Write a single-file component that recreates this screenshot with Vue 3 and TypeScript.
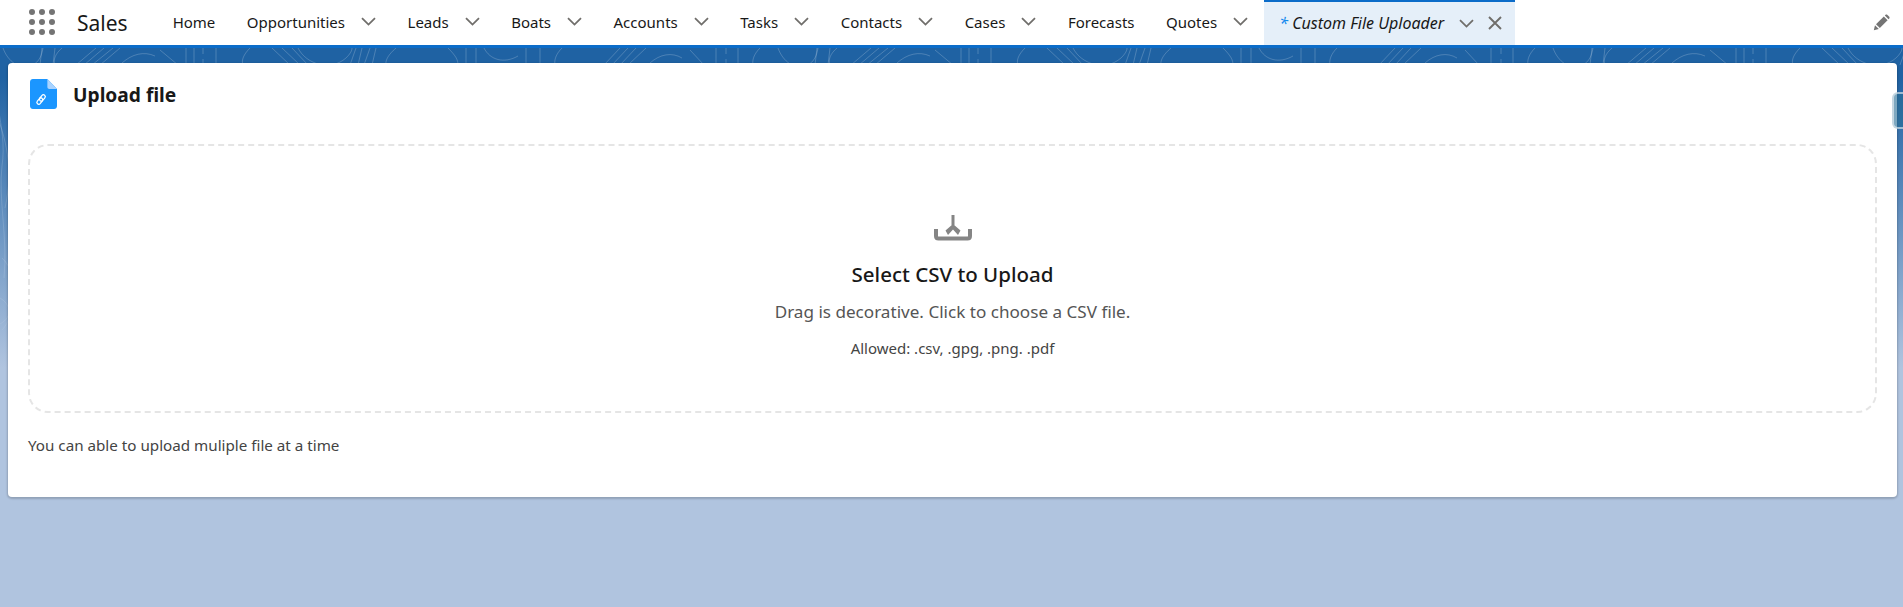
<script setup lang="ts">
interface NavItem {
  label: string
  menu: boolean
}

const items: NavItem[] = [
  { label: 'Home', menu: false },
  { label: 'Opportunities', menu: true },
  { label: 'Leads', menu: true },
  { label: 'Boats', menu: true },
  { label: 'Accounts', menu: true },
  { label: 'Tasks', menu: true },
  { label: 'Contacts', menu: true },
  { label: 'Cases', menu: true },
  { label: 'Forecasts', menu: false },
  { label: 'Quotes', menu: true },
]

const dots: number[] = [0, 1, 2, 3, 4, 5, 6, 7, 8]
</script>

<template>
  <div class="page">
    <div class="backdrop">
      <svg class="contours" width="1903" height="340" aria-hidden="true">
        <defs>
          <linearGradient id="fade" x1="0" y1="0" x2="0" y2="1">
            <stop offset="0" stop-color="#fff" stop-opacity="1" />
            <stop offset="0.75" stop-color="#fff" stop-opacity="0.55" />
            <stop offset="1" stop-color="#fff" stop-opacity="0" />
          </linearGradient>
          <mask id="fadeMask">
            <rect width="1903" height="340" fill="url(#fade)" />
          </mask>
          <pattern id="lines" width="775" height="340" patternUnits="userSpaceOnUse">
            <g fill="none" stroke="#fff" stroke-opacity="0.2" stroke-width="1">
              <path d="M3 0C8 14 20 22 31 18C40 14 42 6 43 0" />
              <path d="M-4 12C-12 40 8 78 2 118C-2 150 8 190 4 230" />
              <path d="M-6 60C6 90 14 120 5 160" />
              <path d="M2 210C20 226 16 268 2 282" />
              <path d="M0 250C10 256 14 268 0 276" />
              <path d="M42 0L40 17M55 0L53 17" />
              <path d="M62 0C55 6 53 12 55 17" />
              <path d="M76 17L96 0M84 17L104 0M92 17L113 0M100 17L120 0" />
              <path d="M122 15C132 6 144 3 155 8" />
              <path d="M160 2L178 17M186 0V17M194 0V17M203 0V6M203 11V17M216 0V17" />
              <path d="M250 0C244 6 241 12 243 17" />
              <path d="M272 0L290 17M282 0L300 17M292 0L308 17M298 0C306 16 330 24 346 10C350 6 352 3 352 0" />
              <path d="M356 0L350 17M362 0L358 17M370 0L364 17M376 0L372 17" />
              <path d="M396 0C389 6 385 12 386 17" />
              <path d="M448 0C456 8 458 12 458 17M466 0V17M476 0V17" />
              <path d="M484 0C490 12 504 16 518 8" />
              <path d="M526 0V17M540 0V17" />
              <path d="M562 0C556 6 554 12 555 17" />
              <path d="M604 17L620 0M612 17L628 0M620 17L636 0M628 17L646 0" />
              <path d="M650 15C660 6 672 4 682 10" />
              <path d="M690 2L704 17M716 0V17M726 0V6M726 11V17M738 0V17" />
              <path d="M760 0C754 6 752 12 753 17" />
            </g>
          </pattern>
        </defs>
        <rect width="1903" height="340" fill="url(#lines)" mask="url(#fadeMask)" />
      </svg>
    </div>

    <header class="topbar">
      <button class="launcher" type="button" aria-label="App launcher">
        <span v-for="dot in dots" :key="dot" class="dot"></span>
      </button>
      <span class="app-name">Sales</span>
      <nav class="nav">
        <a v-for="item in items" :key="item.label" class="nav-item">
          <span>{{ item.label }}</span>
          <svg v-if="item.menu" class="chevron" width="15" height="9" viewBox="0 0 15 9" aria-hidden="true">
            <path d="M1 1.2L7.5 7.6L14 1.2" />
          </svg>
        </a>
      </nav>
      <div class="tab">
        <span class="star">*</span>
        <span class="tab-label">Custom File Uploader</span>
        <svg class="chevron" width="15" height="9" viewBox="0 0 15 9" aria-hidden="true">
          <path d="M1 1.2L7.5 7.6L14 1.2" />
        </svg>
        <svg class="close" width="14" height="14" viewBox="0 0 14 14" aria-hidden="true">
          <path d="M1 1L13 13M13 1L1 13" />
        </svg>
      </div>
      <svg class="pencil" width="17" height="17" viewBox="0 0 17 17" aria-hidden="true">
        <path d="M0.8 16.2L2 11.2L5.8 15L0.8 16.2Z" />
        <path d="M3 10.2L10.8 2.4L14.6 6.2L6.8 14L3 10.2Z" />
        <path d="M11.8 1.4L12.6 0.7C13.1 0.3 13.7 0.3 14.2 0.7L16.3 2.8C16.7 3.3 16.7 3.9 16.3 4.4L15.6 5.2L11.8 1.4Z" />
      </svg>
    </header>

    <main class="content">
      <section class="card">
        <div class="card-head">
          <svg class="file-icon" width="27" height="30" viewBox="0 0 28 30" preserveAspectRatio="none" aria-hidden="true">
            <path d="M3 0H18L28 10V27C28 28.7 26.7 30 25 30H3C1.3 30 0 28.7 0 27V3C0 1.3 1.3 0 3 0Z" fill="#1b96ff" />
            <path d="M18 0L28 10H20C18.9 10 18 9.1 18 8V0Z" fill="#a9d3ff" />
            <g fill="none" stroke="#fff" stroke-width="1.3" transform="rotate(-50 11.5 20.5)">
              <rect x="5.8" y="18.6" width="7.2" height="3.8" rx="1.9" />
              <rect x="10" y="18.6" width="7.2" height="3.8" rx="1.9" />
            </g>
          </svg>
          <h1 class="card-title">Upload file</h1>
        </div>

        <div class="dropzone">
          <svg class="upload-icon" width="40" height="26" viewBox="0 0 40 26" aria-hidden="true">
            <path class="tray" d="M3 14V21C3 22.6 4 23.5 5.5 23.5H34.5C36 23.5 37 22.6 37 21V14" />
            <path class="stem" d="M20 0V10" />
            <path class="wedge" d="M20 9L12.5 15.5L15 20L20 14.5L25 20L27.5 15.5Z" />
          </svg>
          <h2 class="drop-title">Select CSV to Upload</h2>
          <p class="drop-text">Drag is decorative. Click to choose a CSV file.</p>
          <p class="drop-allowed">Allowed: .csv, .gpg, .png. .pdf</p>
        </div>

        <p class="note">You can able to upload muliple file at a time</p>
      </section>
    </main>

    <div class="side-handle"></div>
  </div>
</template>

<style>
html,
body {
  margin: 0;
  padding: 0;
  background: #b0c4df;
}
</style>

<style scoped>
.page {
  position: relative;
  width: 1903px;
  height: 607px;
  overflow: hidden;
  font-family: "Noto Sans", "Open Sans", sans-serif;
  color: #181818;
}

.backdrop {
  position: absolute;
  inset: 48px 0 0;
  background: linear-gradient(#1f62a3 0, #1f62a3 30px, #b0c4df 320px);
}

.contours {
  display: block;
}

.topbar {
  position: relative;
  display: flex;
  align-items: center;
  height: 45px;
  background: #fff;
  border-bottom: 3px solid #0b6cc9;
}

.launcher {
  display: grid;
  grid-template-columns: repeat(3, 6px);
  gap: 4px;
  margin: 0 0 0 29px;
  padding: 0;
  border: 0;
  background: none;
  transform: translateY(-1px);
}

.dot {
  width: 6px;
  height: 6px;
  border-radius: 50%;
  background: #747474;
}

.app-name {
  margin-left: 22px;
  font-size: 21px;
  line-height: 24px;
}

.nav {
  display: flex;
  align-items: center;
  gap: 31.5px;
  margin-left: 45px;
  padding-bottom: 2px;
  font-size: 15px;
}

.nav-item {
  display: flex;
  align-items: center;
  gap: 16px;
  color: #181818;
}

.chevron {
  flex: none;
  fill: none;
  stroke: #706e6b;
  stroke-width: 1.8;
}

.tab {
  display: flex;
  align-items: center;
  align-self: stretch;
  box-sizing: border-box;
  flex: none;
  width: 251px;
  margin-left: 16px;
  padding-left: 15px;
  padding-bottom: 1px;
  background: #e5eff9;
  border-top: 2px solid #0b6cc9;
  font-size: 16px;
  font-style: italic;
}

.star {
  width: 13px;
  color: #1589ee;
}

.tab-label {
  width: 167px;
  white-space: nowrap;
}

.close {
  margin-left: 14px;
  fill: none;
  stroke: #706e6b;
  stroke-width: 1.9;
}

.pencil {
  margin-left: auto;
  margin-right: 13px;
  fill: #747474;
}

.content {
  position: relative;
  padding: 15px 6px 0 8px;
}

.card {
  box-sizing: border-box;
  height: 434px;
  padding: 16px 20px 0;
  background: #fff;
  border-radius: 4px;
  box-shadow: 0 1px 2px 1px rgba(0, 0, 0, 0.18);
}

.card-head {
  display: flex;
  align-items: center;
  height: 30px;
  gap: 16px;
  padding-left: 2px;
}

.card-title {
  margin: 2px 0 0;
  font-size: 19.2px;
  font-weight: 700;
  line-height: 24px;
}

.dropzone {
  box-sizing: border-box;
  display: flex;
  flex-direction: column;
  align-items: center;
  height: 269px;
  margin-top: 35px;
  padding-top: 69px;
  border: 2px dashed #e5e5e5;
  border-radius: 20px;
}

.upload-icon {
  fill: none;
  stroke: #858585;
}

.tray {
  stroke-width: 4;
}

.stem {
  stroke-width: 3;
}

.wedge {
  fill: #858585;
  stroke: none;
}

.drop-title {
  margin: 20px 0 0;
  font-size: 20.5px;
  font-weight: 500;
  line-height: 26px;
}

.drop-text {
  margin: 13px 0 0;
  font-size: 17.1px;
  line-height: 24px;
  color: #555;
}

.drop-allowed {
  margin: 14px 0 0;
  font-size: 15px;
  line-height: 20px;
  color: #444;
}

.note {
  margin: 22px 0 0;
  font-size: 15.2px;
  line-height: 20px;
  color: #444;
}

.side-handle {
  position: absolute;
  top: 92px;
  right: -6px;
  box-sizing: border-box;
  width: 17px;
  height: 37px;
  border: 2px solid rgba(255, 255, 255, 0.55);
  border-radius: 6px;
  background: rgba(40, 110, 150, 0.6);
}
</style>
